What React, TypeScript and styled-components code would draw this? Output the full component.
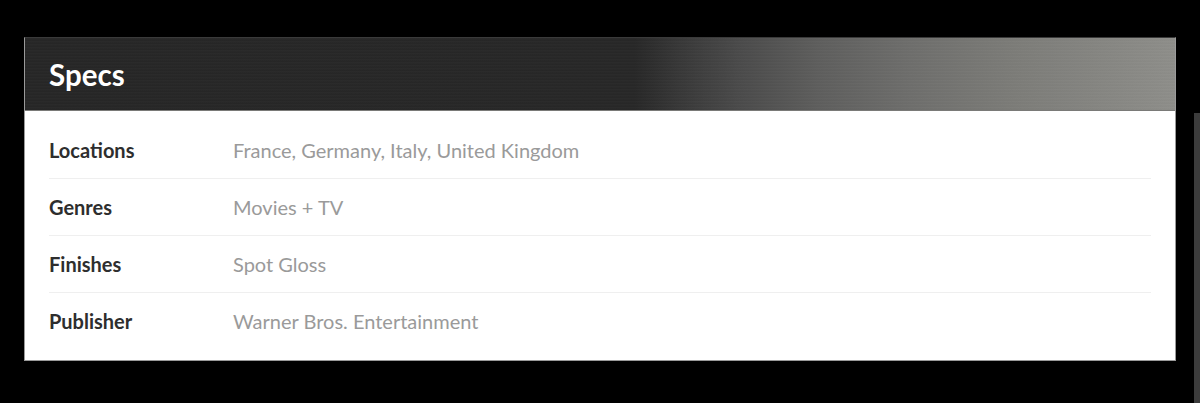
import React from "react";
import styled, { createGlobalStyle } from "styled-components";

const Global = createGlobalStyle`
  html, body { margin: 0; padding: 0; background: #000; }
  body { font-family: "Lato", "Open Sans", sans-serif; width: 1200px; height: 403px; overflow: hidden; position: relative; }
`;

const Page = styled.div`
  padding: 37px 24px 0 24px;
  width: 1152px;
`;

const Card = styled.section`
  border: 1px solid #9a9a9a;
  border-top-color: #3a3a3a;
  background: #fff;
`;

const Header = styled.header`
  height: 72px;
  display: flex;
  align-items: center;
  padding: 0 24px;
  border-bottom: 1px solid #7a7a78;
  background:
    repeating-linear-gradient(
      180deg,
      rgba(255, 255, 255, 0.02) 0px,
      rgba(255, 255, 255, 0.02) 1px,
      rgba(0, 0, 0, 0.025) 2px,
      rgba(0, 0, 0, 0) 3px
    ),
    linear-gradient(
      90deg,
      #262626 0%,
      #272727 53%,
      #383838 57%,
      #4a4a4a 62%,
      #5e5e5d 69%,
      #6e6e6c 77%,
      #7c7c78 86%,
      #8e8e8a 100%
    );
`;

const Title = styled.h2`
  margin: 0;
  font-family: "Lato", sans-serif;
  font-weight: 700;
  font-size: 29.5px;
  color: #fff;
`;

const List = styled.dl`
  margin: 0;
  padding: 11px 24px;
`;

const Row = styled.div<{ $last?: boolean }>`
  display: flex;
  align-items: center;
  height: 56px;
  border-bottom: ${(p) => (p.$last ? "none" : "1px solid #efefef")};
`;

const Label = styled.dt`
  width: 184px;
  flex: none;
  font-weight: 700;
  font-size: 20px;
  color: #2e2e2e;
`;

const Value = styled.dd`
  margin: 0;
  font-size: 20px;
  color: #9a9a9a;
`;

const ScrollThumb = styled.div`
  position: absolute;
  right: 0;
  top: 113px;
  width: 6px;
  bottom: 0;
  background: #3c3c3c;
`;

const specs = [
  ["Locations", "France, Germany, Italy, United Kingdom"],
  ["Genres", "Movies + TV"],
  ["Finishes", "Spot Gloss"],
  ["Publisher", "Warner Bros. Entertainment"],
];

export default function App() {
  return (
    <>
      <Global />
      <Page>
        <Card>
          <Header>
            <Title>Specs</Title>
          </Header>
          <List>
            {specs.map(([k, v], i) => (
              <Row key={k} $last={i === specs.length - 1}>
                <Label>{k}</Label>
                <Value>{v}</Value>
              </Row>
            ))}
          </List>
        </Card>
      </Page>
      <ScrollThumb />
    </>
  );
}
